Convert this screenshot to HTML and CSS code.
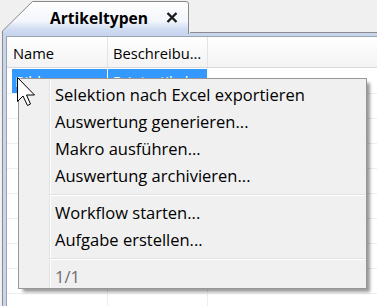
FILE: index.html
```html
<!DOCTYPE html>
<html lang="de">
<head>
  <meta charset="UTF-8" />
  <title>Artikeltypen</title>
  <link rel="stylesheet" href="styles.css">
</head>
<body>
  <div class="screen">

    <div class="tabbar">
      <div class="tab">
        <svg class="tab-shape" width="188" height="34" viewBox="0 0 188 34">
          <defs>
            <linearGradient id="tabfill" x1="0" y1="0" x2="0" y2="1">
              <stop offset="0" stop-color="#ffffff"/>
              <stop offset="0.6" stop-color="#f3f6fc"/>
              <stop offset="0.85" stop-color="#d0dcf2"/>
              <stop offset="1" stop-color="#c7d5ee"/>
            </linearGradient>
          </defs>
          <path d="M0.5,34 L0.5,31 L30.5,1.5 L184,1.5 Q186.5,1.5 186.5,4 L186.5,34" fill="url(#tabfill)" stroke="#898989"/>
        </svg>
        <span class="tab-title">Artikeltypen</span>
        <svg class="tab-close" width="12" height="11" viewBox="0 0 12 11">
          <path d="M1.5,1 L10.5,10 M10.5,1 L1.5,10" stroke="#1c1c1c" stroke-width="2.4"/>
        </svg>
      </div>
      <div class="tabbar-rest"></div>
    </div>

    <div class="panel">
      <div class="grid">
        <div class="row head">
          <div class="cell">Name</div>
          <div class="cell">Beschreibu…</div>
          <div class="cell"></div>
        </div>
        <div class="row selected">
          <div class="cell">Bilder</div>
          <div class="cell">Printartikel</div>
          <div class="cell"></div>
        </div>
        <div class="row"><div class="cell"></div><div class="cell"></div><div class="cell"></div></div>
        <div class="row"><div class="cell"></div><div class="cell"></div><div class="cell"></div></div>
        <div class="row"><div class="cell"></div><div class="cell"></div><div class="cell"></div></div>
        <div class="row"><div class="cell"></div><div class="cell"></div><div class="cell"></div></div>
        <div class="row"><div class="cell"></div><div class="cell"></div><div class="cell"></div></div>
        <div class="row"><div class="cell"></div><div class="cell"></div><div class="cell"></div></div>
        <div class="row"><div class="cell"></div><div class="cell"></div><div class="cell"></div></div>
        <div class="row"><div class="cell"></div><div class="cell"></div><div class="cell"></div></div>
        <div class="row"><div class="cell"></div><div class="cell"></div><div class="cell"></div></div>
      </div>
    </div>

    <div class="menu">
      <div class="menu-item">Selektion nach Excel exportieren</div>
      <div class="menu-item">Auswertung generieren...</div>
      <div class="menu-item">Makro ausführen...</div>
      <div class="menu-item">Auswertung archivieren...</div>
      <div class="menu-sep"></div>
      <div class="menu-item">Workflow starten...</div>
      <div class="menu-item">Aufgabe erstellen...</div>
      <div class="menu-sep"></div>
      <div class="menu-item disabled">1/1</div>
    </div>

    <svg class="cursor" width="20" height="30" viewBox="0 0 20 30">
      <path d="M0.5,0.5 L0.5,24.5 L6,19 L10.5,28.5 L13.5,27 L9.5,18 L17.5,18 Z" fill="#fff" stroke="#000"/>
    </svg>

  </div>
</body>
</html>
```

FILE: styles.css
```css
* {
  box-sizing: border-box;
}

body {
  margin: 0;
  background: #f0f0f0;
  font-family: "Open Sans", sans-serif;
  color: #000;
  overflow: hidden;
}

.screen {
  position: relative;
  width: 377px;
  height: 306px;
  overflow: hidden;
}

/* tab strip */

.tabbar {
  display: flex;
  height: 33px;
  padding-left: 2px;
}

.tab {
  position: relative;
  width: 188px;
  display: flex;
  align-items: center;
  padding: 2px 0 0 48px;
}

.tab-shape {
  position: absolute;
  left: 0;
  top: 0;
}

.tab-title {
  position: relative;
  font-weight: bold;
  font-size: 15.6px;
}

.tab-close {
  position: relative;
  margin-left: 18px;
}

.tabbar-rest {
  flex: 1;
  border-bottom: 1px solid #8c8c8c;
}

/* grid */

.panel {
  margin-left: 2px;
  height: 273px;
  border-left: 1px solid #8c8c8c;
  background: #c7d5ee;
  padding: 3px 0 0 3px;
}

.grid {
  height: 100%;
  background: #fff;
  border-left: 1px solid #9ba3ad;
  border-top: 1px solid #9ba3ad;
}

.row {
  display: flex;
  height: 25px;
  padding-left: 5px;
  border-bottom: 1px solid #eeeeee;
  font-size: 14.7px;
}

.cell {
  width: 100px;
  border-right: 1px solid #eeeeee;
  line-height: 24px;
  padding-left: 5px;
  white-space: nowrap;
  overflow: hidden;
}

.cell:first-child {
  width: 96px;
  padding-left: 3px;
}

.cell:last-child {
  flex: 1;
  border-right: none;
}

.row.head {
  height: 31px;
  padding-left: 0;
  margin-bottom: 1px;
  background: linear-gradient(#ffffff, #f3f3f3);
  border-bottom: 1px solid #d8d8d8;
}

.head .cell {
  line-height: 28px;
  padding-top: 2px;
  border-right-color: #e4e4e4;
}

.head .cell:first-child {
  width: 101px;
  padding-left: 6px;
}

.selected .cell {
  background: #3399ff;
  color: #fff;
  border-right-color: #fff;
}

.selected .cell:last-child {
  background: #fff;
}

/* context menu */

.menu {
  position: absolute;
  left: 18px;
  top: 78px;
  width: 349px;
  height: 211px;
  padding-top: 2px;
  border: 1px solid #979797;
  background: linear-gradient(to right, transparent 30px, #e2e3e3 30px, #e2e3e3 31px, #ffffff 31px, #ffffff 32px, transparent 32px), #f0f0f0;
  box-shadow: 4px 4px 3px -1px rgba(0, 0, 0, 0.4);
  font-size: 16.5px;
}

.menu-item {
  height: 27px;
  line-height: 27px;
  padding-left: 36px;
  white-space: nowrap;
}

.menu-item.disabled {
  color: #6d6d6d;
}

.menu-sep {
  margin: 5px 2px 3px 31px;
  border-top: 1px solid #e0e0e0;
  border-bottom: 1px solid #ffffff;
}

.cursor {
  position: absolute;
  left: 17px;
  top: 77px;
}
```
